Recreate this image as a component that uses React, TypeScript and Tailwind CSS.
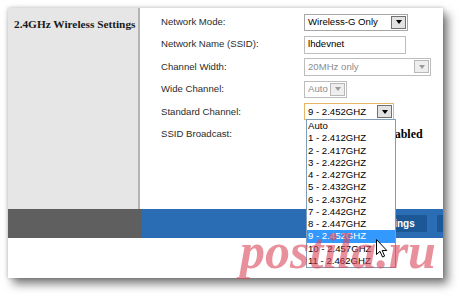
import type { ReactNode } from "react";

const CHANNELS = [
  "Auto",
  "1 - 2.412GHZ",
  "2 - 2.417GHZ",
  "3 - 2.422GHZ",
  "4 - 2.427GHZ",
  "5 - 2.432GHZ",
  "6 - 2.437GHZ",
  "7 - 2.442GHZ",
  "8 - 2.447GHZ",
  "9 - 2.452GHZ",
  "10 - 2.457GHZ",
  "11 - 2.462GHZ",
];

const SELECTED = 9;

interface SelectBoxProps {
  value: string;
  className: string;
  disabled?: boolean;
  focused?: boolean;
}

const SelectBox = ({ value, className, disabled = false, focused = false }: SelectBoxProps) => (
  <div
    className={`flex h-[17px] items-center justify-between border bg-white pr-[1px] pl-[3px] ${
      focused ? "border-[#e3b766]" : disabled ? "border-[#bdbdbd]" : "border-[#a6a6a6]"
    } ${className}`}
  >
    <span className={disabled ? "text-[#8c8c8c]" : "text-black"}>{value}</span>
    <span
      className={`flex h-[13px] w-[15px] items-center justify-center border ${
        disabled ? "border-[#b8b8b8] bg-[#eeeeee]" : "border-[#707070] bg-[#e2e2e2]"
      }`}
    >
      <span
        className={`border-x-[3.5px] border-t-[4px] border-x-transparent ${
          disabled ? "border-t-[#9a9a9a]" : "border-t-black"
        }`}
      />
    </span>
  </div>
);

const Row = ({ label, children }: { label: string; children?: ReactNode }) => (
  <div className="flex h-[22.4px] items-center">
    <span className="w-[143px] shrink-0 text-[#2b2b2b]">{label}</span>
    {children}
  </div>
);

export default function App() {
  return (
    <div className="relative h-[295px] w-[460px] overflow-hidden bg-white font-['Liberation_Sans',Arial,sans-serif] text-[9.6px]">
      <div className="relative mt-2 ml-2 h-[270px] w-[435px] overflow-hidden bg-white shadow-[0_0_4px_rgba(0,0,0,0.25),5px_6px_9px_rgba(0,0,0,0.5)]">
        <div className="flex h-[201px]">
          <div className="w-[132px] shrink-0 border-r-2 border-[#b4b4b4] bg-[#e6e6e6] pt-[9px] pl-[6px]">
            <h2 className="font-['Liberation_Serif','Times_New_Roman',serif] text-[11.3px] leading-[14px] font-bold whitespace-nowrap text-[#1a1a1a]">
              2.4GHz Wireless Settings
            </h2>
          </div>

          <div className="flex flex-1 flex-col pt-[3px] pl-[21px]">
            <Row label="Network Mode:">
              <SelectBox value="Wireless-G Only" className="w-[104px]" />
            </Row>
            <Row label="Network Name (SSID):">
              <div className="flex h-[18px] w-[102px] items-center border border-[#bdbdbd] pl-[3px] text-black">
                lhdevnet
              </div>
            </Row>
            <Row label="Channel Width:">
              <SelectBox value="20MHz only" className="h-[18px] w-[127px]" disabled />
            </Row>
            <Row label="Wide Channel:">
              <SelectBox value="Auto" className="w-[43px]" disabled />
            </Row>
            <Row label="Standard Channel:">
              <SelectBox value={CHANNELS[SELECTED]} className="h-[16px] w-[90px]" focused />
            </Row>
            <Row label="SSID Broadcast:">
              <span className="ml-[60px] h-[12px] w-[12px] rounded-full border border-[#8a8a8a] bg-white" />
              <span className="ml-[4px] font-['Liberation_Serif','Times_New_Roman',serif] text-[12px] font-bold text-black">
                Enabled
              </span>
            </Row>
          </div>
        </div>

        <div className="flex h-[29px]">
          <div className="w-[134px] shrink-0 bg-[#5f5f5f]" />
          <div className="flex flex-1 items-center gap-[10px] bg-[#2a6db4] pl-[195px]">
            <button
              type="button"
              className="h-[17px] w-[90px] shrink-0 bg-[#1c5796] text-[10px] font-bold text-white"
            >
              Save Settings
            </button>
            <button
              type="button"
              className="h-[17px] w-[96px] shrink-0 bg-[#1c5796] text-[10px] font-bold text-white"
            >
              Cancel Changes
            </button>
          </div>
        </div>

        {/* open channel list */}
        <ul className="absolute top-[111px] left-[298px] w-[90px] border border-[#7f9db9] bg-white">
          {CHANNELS.map((channel, index) => (
            <li
              key={channel}
              className={`h-[12.27px] pl-[1px] leading-[12.27px] ${
                index === SELECTED ? "bg-[#3399ff] text-white" : "text-black"
              }`}
            >
              {channel}
            </li>
          ))}
        </ul>

        <svg
          className="absolute top-[231px] left-[368px]"
          width="12"
          height="19"
          viewBox="0 0 12 19"
        >
          <path
            d="M0.5 0.5 L0.5 15.5 L4 12.3 L6.5 18 L8.6 17.1 L6.2 11.5 L10.8 11.5 Z"
            fill="white"
            stroke="black"
            strokeWidth="1"
          />
        </svg>
      </div>

      {/* watermark */}
      <span className="pointer-events-none absolute top-[225px] left-[240px] font-['Liberation_Serif','Times_New_Roman',serif] text-[50px] leading-[52px] font-bold italic text-[rgba(216,70,90,0.6)]">
        postila.ru
      </span>
    </div>
  );
}
